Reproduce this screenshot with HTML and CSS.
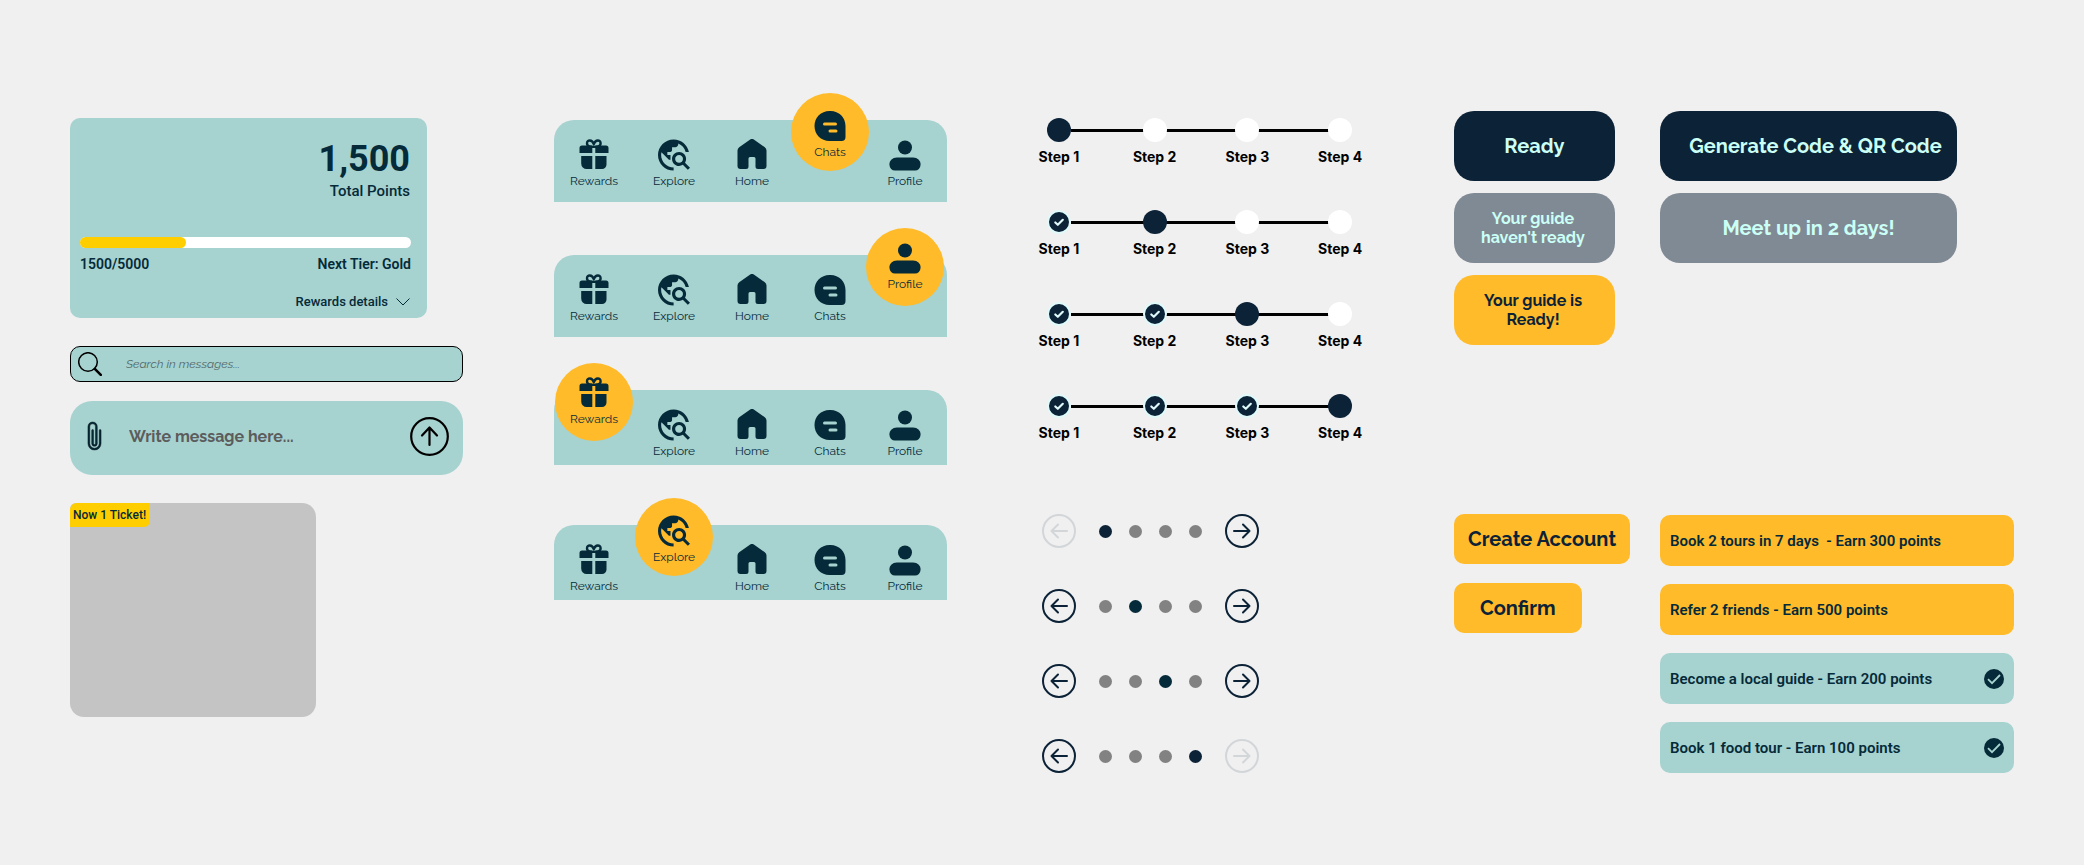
FILE: index.html
```html
<!DOCTYPE html>
<html lang="en">
<head>
<meta charset="utf-8">
<meta name="viewport" content="width=device-width, initial-scale=1">
<title>Travel app components</title>
<link rel="stylesheet" href="styles.css">
</head>
<body>
<svg class="sprite" aria-hidden="true">
  <symbol id="i-gift" viewBox="0 1 32 32">
    <path d="M4 7.500h10.300V15H1.500v-5A2.500 2.500 0 0 1 4 7.500zM17.300 7.500H28a2.500 2.500 0 0 1 2.500 2.500v5H17.300zM3.200 18h11.100v13H8.700a5.500 5.500 0 0 1-5.500-5.500zM17.300 18h11.200v8.500A4.500 4.500 0 0 1 24 31h-6.700z"/>
    <path d="M15.800 8.800C12.500 9.200 9 8.500 9 5.200 9 1.600 14.200 1.200 15.800 6c1.600-4.800 6.800-4.400 6.800-.8 0 3.300-3.500 4-6.800 3.600z" fill="none" stroke="currentColor" stroke-width="2.400" stroke-linejoin="round"/>
  </symbol>
  <symbol id="i-explore" viewBox="2 2 20.500 20">
    <path d="M19.300 16.900c.4-.7.7-1.500.7-2.400 0-2.500-2-4.500-4.500-4.500S11 12 11 14.500s2 4.500 4.500 4.500c.9 0 1.700-.3 2.400-.7l3.200 3.200 1.400-1.400-3.200-3.200zm-3.800.1c-1.400 0-2.500-1.100-2.500-2.500s1.100-2.500 2.500-2.500 2.500 1.100 2.500 2.500-1.100 2.500-2.500 2.500zM12 20v2C6.480 22 2 17.520 2 12S6.480 2 12 2c4.840 0 8.870 3.440 9.800 8h-2.070c-.64-2.460-2.400-4.470-4.730-5.410V5c0 1.100-.9 2-2 2h-2v2c0 .55-.45 1-1 1H8v2h2v3H9l-4.790-4.790C4.080 10.790 4 11.380 4 12c0 4.410 3.590 8 8 8z"/>
  </symbol>
  <symbol id="i-home" viewBox="0 1 32 32">
    <path d="M14.200 1.500a3 3 0 0 1 3.600 0l11 7.800a4 4 0 0 1 1.700 3.200V28a3 3 0 0 1-3 3H22a2.500 2.500 0 0 1-2.500-2.500V20.500a1.500 1.500 0 0 0-1.500-1.500h-4a1.500 1.500 0 0 0-1.500 1.500v8A2.500 2.500 0 0 1 10 31H4.500a3 3 0 0 1-3-3V12.500a4 4 0 0 1 1.700-3.200z"/>
  </symbol>
  <symbol id="i-chat" viewBox="0 0 32 32">
    <path fill-rule="evenodd" d="M15.500 1h1C25 1 31.500 7.500 31.500 16v11a4 4 0 0 1-4 4h-12C7 31 .5 24.500.5 16S7 1 15.500 1zM10.500 12.500a1.500 1.500 0 0 0 0 3h11a1.500 1.500 0 0 0 0-3zM16 19.500a1.500 1.500 0 0 0 0 3h6a1.500 1.500 0 0 0 0-3z"/>
  </symbol>
  <symbol id="i-profile" viewBox="0 0 32 32">
    <circle cx="16" cy="8.500" r="7"/>
    <path d="M8 18.500h16a7.500 6.500 0 0 1 7.500 7.500 5.500 5.500 0 0 1-5.500 5.500H6A5.500 5.500 0 0 1 .5 26 7.500 6.500 0 0 1 8 18.500z"/>
  </symbol>
  <symbol id="i-arrow-left" viewBox="0 0 34 34">
    <g fill="none" stroke="currentColor" stroke-width="2" stroke-linecap="round" stroke-linejoin="round"><circle cx="17" cy="17" r="16"/><path d="M25 17H9.500M16 10.500 9.500 17l6.500 6.500"/></g>
  </symbol>
  <symbol id="i-arrow-right" viewBox="0 0 34 34">
    <g fill="none" stroke="currentColor" stroke-width="2" stroke-linecap="round" stroke-linejoin="round"><circle cx="17" cy="17" r="16"/><path d="M9 17h15.500M18 10.500l6.500 6.500-6.500 6.500"/></g>
  </symbol>
  <symbol id="i-done" viewBox="0 0 24 24">
    <circle cx="12" cy="12" r="11" fill="#0c2237" stroke="#dffafa" stroke-width="2"/>
    <path d="M8.300 12.500l2.500 2.300 5-5" fill="none" stroke="#dffafa" stroke-width="2.200" stroke-linecap="round" stroke-linejoin="round"/>
  </symbol>
  <symbol id="i-check" viewBox="0 0 20 20">
    <circle cx="10" cy="10" r="10"/>
    <path d="M4 10.200l4 4 8-8.200" fill="none" stroke="#a6d2cf" stroke-width="1.800"/>
  </symbol>
</svg>

<main class="board">
  <div class="col col-cards">
    <section class="points">
      <div class="points-total">1,500</div>
      <div class="points-label">Total Points</div>
      <div class="bar"><div class="bar-fill" style="width:32%"></div></div>
      <div class="tier"><span>1500/5000</span><span>Next Tier: Gold</span></div>
      <button class="details" type="button">Rewards details
        <svg class="chevron" viewBox="0 0 14 8"><path d="M.5.5 7 7 13.500.5" fill="none" stroke="currentColor"/></svg>
      </button>
    </section>
    <form class="search">
      <svg class="search-icon" viewBox="0 0 24 24"><g fill="none" stroke="#000"><circle cx="10" cy="10" r="9.300" stroke-width="1.500"/><path d="M16.800 16.800l6 6" stroke-width="2.600" stroke-linecap="round"/></g></svg>
      <input class="search-input" type="search" placeholder="Search in messages..." aria-label="Search in messages">
    </form>
    <form class="compose">
      <button class="icon-btn" type="button" aria-label="Attach a file">
        <svg class="clip" viewBox="4 0 8 16"><path stroke="#000" stroke-width=".2" d="M4.500 3a2.500 2.500 0 0 1 5 0v9a1.500 1.500 0 0 1-3 0V5a.5.5 0 0 1 1 0v7a.5.5 0 0 0 1 0V3a1.500 1.500 0 1 0-3 0v9a2.500 2.500 0 0 0 5 0V5a.5.5 0 0 1 1 0v7a3.500 3.500 0 1 1-7 0z"/></svg>
      </button>
      <input class="compose-input" type="text" placeholder="Write message here..." aria-label="Message">
      <button class="icon-btn" type="submit" aria-label="Send">
        <svg class="send" viewBox="0 0 39 39"><g fill="none" stroke="#000" stroke-width="2.200" stroke-linecap="round" stroke-linejoin="round"><circle cx="19.500" cy="19.500" r="18.300"/><path d="M19.500 28V11M12 18.500l7.500-8 7.500 8"/></g></svg>
      </button>
    </form>
    <div class="ticket"><span class="ticket-tag">Now 1 Ticket!</span></div>
  </div>

  <div class="col col-navs">
    <nav class="nav">
      <a class="tab" href="#rewards"><svg class="tab-icon"><use href="#i-gift"/></svg>Rewards</a>
      <a class="tab" href="#explore"><svg class="tab-icon"><use href="#i-explore"/></svg>Explore</a>
      <a class="tab" href="#home"><svg class="tab-icon"><use href="#i-home"/></svg>Home</a>
      <a class="tab active low" href="#chats"><svg class="tab-icon"><use href="#i-chat"/></svg>Chats</a>
      <a class="tab" href="#profile"><svg class="tab-icon"><use href="#i-profile"/></svg>Profile</a>
    </nav>
    <nav class="nav">
      <a class="tab" href="#rewards"><svg class="tab-icon"><use href="#i-gift"/></svg>Rewards</a>
      <a class="tab" href="#explore"><svg class="tab-icon"><use href="#i-explore"/></svg>Explore</a>
      <a class="tab" href="#home"><svg class="tab-icon"><use href="#i-home"/></svg>Home</a>
      <a class="tab" href="#chats"><svg class="tab-icon"><use href="#i-chat"/></svg>Chats</a>
      <a class="tab active" href="#profile"><svg class="tab-icon"><use href="#i-profile"/></svg>Profile</a>
    </nav>
    <nav class="nav short">
      <a class="tab active" href="#rewards"><svg class="tab-icon"><use href="#i-gift"/></svg>Rewards</a>
      <a class="tab" href="#explore"><svg class="tab-icon"><use href="#i-explore"/></svg>Explore</a>
      <a class="tab" href="#home"><svg class="tab-icon"><use href="#i-home"/></svg>Home</a>
      <a class="tab" href="#chats"><svg class="tab-icon"><use href="#i-chat"/></svg>Chats</a>
      <a class="tab" href="#profile"><svg class="tab-icon"><use href="#i-profile"/></svg>Profile</a>
    </nav>
    <nav class="nav short">
      <a class="tab" href="#rewards"><svg class="tab-icon"><use href="#i-gift"/></svg>Rewards</a>
      <a class="tab active low" href="#explore"><svg class="tab-icon"><use href="#i-explore"/></svg>Explore</a>
      <a class="tab" href="#home"><svg class="tab-icon"><use href="#i-home"/></svg>Home</a>
      <a class="tab" href="#chats"><svg class="tab-icon"><use href="#i-chat"/></svg>Chats</a>
      <a class="tab" href="#profile"><svg class="tab-icon"><use href="#i-profile"/></svg>Profile</a>
    </nav>
  </div>

  <div class="col col-steps">
    <div class="steppers">
      <ol class="stepper">
        <li class="step"><span class="dot now"></span>Step 1</li>
        <li class="step"><span class="dot"></span>Step 2</li>
        <li class="step"><span class="dot"></span>Step 3</li>
        <li class="step"><span class="dot"></span>Step 4</li>
      </ol>
      <ol class="stepper">
        <li class="step"><svg class="dot"><use href="#i-done"/></svg>Step 1</li>
        <li class="step"><span class="dot now"></span>Step 2</li>
        <li class="step"><span class="dot"></span>Step 3</li>
        <li class="step"><span class="dot"></span>Step 4</li>
      </ol>
      <ol class="stepper">
        <li class="step"><svg class="dot"><use href="#i-done"/></svg>Step 1</li>
        <li class="step"><svg class="dot"><use href="#i-done"/></svg>Step 2</li>
        <li class="step"><span class="dot now"></span>Step 3</li>
        <li class="step"><span class="dot"></span>Step 4</li>
      </ol>
      <ol class="stepper">
        <li class="step"><svg class="dot"><use href="#i-done"/></svg>Step 1</li>
        <li class="step"><svg class="dot"><use href="#i-done"/></svg>Step 2</li>
        <li class="step"><svg class="dot"><use href="#i-done"/></svg>Step 3</li>
        <li class="step"><span class="dot now"></span>Step 4</li>
      </ol>
    </div>
    <div class="pagers">
      <div class="pager">
        <button class="icon-btn arrow" type="button" aria-label="Previous" disabled><svg><use href="#i-arrow-left"/></svg></button>
        <span class="pages"><i class="page now"></i><i class="page"></i><i class="page"></i><i class="page"></i></span>
        <button class="icon-btn arrow" type="button" aria-label="Next"><svg><use href="#i-arrow-right"/></svg></button>
      </div>
      <div class="pager">
        <button class="icon-btn arrow" type="button" aria-label="Previous"><svg><use href="#i-arrow-left"/></svg></button>
        <span class="pages"><i class="page"></i><i class="page mid"></i><i class="page"></i><i class="page"></i></span>
        <button class="icon-btn arrow" type="button" aria-label="Next"><svg><use href="#i-arrow-right"/></svg></button>
      </div>
      <div class="pager">
        <button class="icon-btn arrow" type="button" aria-label="Previous"><svg><use href="#i-arrow-left"/></svg></button>
        <span class="pages"><i class="page"></i><i class="page"></i><i class="page mid"></i><i class="page"></i></span>
        <button class="icon-btn arrow" type="button" aria-label="Next"><svg><use href="#i-arrow-right"/></svg></button>
      </div>
      <div class="pager">
        <button class="icon-btn arrow" type="button" aria-label="Previous"><svg><use href="#i-arrow-left"/></svg></button>
        <span class="pages"><i class="page"></i><i class="page"></i><i class="page"></i><i class="page now"></i></span>
        <button class="icon-btn arrow" type="button" aria-label="Next" disabled><svg><use href="#i-arrow-right"/></svg></button>
      </div>
    </div>
  </div>

  <div class="col col-buttons">
    <div class="states">
      <div class="stack">
        <button class="pill navy" type="button">Ready</button>
        <button class="pill muted small" type="button">Your guide<br>haven't ready</button>
        <button class="pill amber small" type="button">Your guide is<br>Ready!</button>
      </div>
      <div class="stack">
        <button class="pill navy code" type="button">Generate Code &amp; QR Code</button>
        <button class="pill muted" type="button">Meet up in 2 days!</button>
      </div>
    </div>
    <div class="actions">
      <div class="action-list">
        <button class="action" type="button">Create Account</button>
        <button class="action confirm" type="button">Confirm</button>
      </div>
      <ul class="tasks">
        <li class="task">Book 2 tours in 7 days  - Earn 300 points</li>
        <li class="task">Refer 2 friends - Earn 500 points</li>
        <li class="task done">Become a local guide - Earn 200 points<svg class="task-check"><use href="#i-check"/></svg></li>
        <li class="task done">Book 1 food tour - Earn 100 points<svg class="task-check"><use href="#i-check"/></svg></li>
      </ul>
    </div>
  </div>
</main>
</body>
</html>
```
FILE: styles.css
```css
:root {
  --teal: #a6d2cf;
  --amber: #ffbb29;
  --yellow: #ffce00;
  --ink: #052a39;
  --navy: #0c2237;
  --mint: #cbfff6;
  --heading: Raleway, Lato, sans-serif;
}
* { box-sizing: border-box; }
body {
  margin: 0;
  background: #f0f0f0;
  color: var(--ink);
  font-family: Roboto, sans-serif;
}
button, input { font: inherit; color: inherit; }
button { border: 0; padding: 0; background: none; cursor: pointer; }
ol, ul { margin: 0; padding: 0; list-style: none; }
svg { display: block; fill: currentColor; }
.sprite { position: absolute; width: 0; height: 0; }

.board {
  display: grid;
  grid-template-columns: 484fr 456fr 444fr 560fr;
  padding: 111px 70px 48px;
}

/* Points card, inputs, ticket */
.col-cards { padding: 7px 91px 0 0; }
.points {
  display: flex;
  flex-direction: column;
  height: 200px;
  margin-right: 36px;
  padding: 20px 16px 0 10px;
  border-radius: 10px;
  background: var(--teal);
}
.points-total { font-size: 36px; font-weight: 700; line-height: 42px; text-align: right; padding-right: 1px; }
.points-label { font-size: 15px; font-weight: 500; line-height: 22px; text-align: right; padding-right: 1px; }
.bar { height: 11px; margin-top: 35px; border-radius: 6px; background: #fff; }
.bar-fill { height: 100%; border-radius: 6px; background: var(--yellow); }
.tier { display: flex; justify-content: space-between; margin-top: 8px; font-size: 14px; font-weight: 600; line-height: 16px; }
.details { display: flex; align-items: center; align-self: flex-end; gap: 8px; margin-top: 22px; padding-right: 1px; font-size: 13px; font-weight: 500; line-height: 16px; }
.chevron { width: 14px; height: 8px; }

.search {
  display: flex;
  align-items: center;
  gap: 24px;
  height: 36px;
  margin-top: 28px;
  padding: 0 7px;
  border: 1px solid #000;
  border-radius: 10px;
  background: var(--teal);
}
.search-icon { width: 24px; height: 24px; }
.search-input, .compose-input { flex: 1; min-width: 0; border: 0; padding: 0; outline: 0; background: none; font-family: var(--heading); }
.search-input { font-size: 12px; font-style: italic; }
.search-input::placeholder { color: #52696a; opacity: 1; }
.compose {
  display: flex;
  align-items: center;
  height: 74px;
  margin-top: 19px;
  padding: 0 14px 4px 17px;
  border-radius: 22px;
  background: var(--teal);
}
.clip { width: 15px; height: 30px; }
.compose-input { margin-left: 27px; font-size: 16px; font-weight: 700; }
.compose-input::placeholder { color: #5c5c5c; opacity: 1; }
.send { width: 39px; height: 39px; }
.ticket {
  height: 214px;
  margin: 28px 147px 0 0;
  border-radius: 6px 14px 14px 14px;
  background: #c4c4c4;
  overflow: hidden;
}
.ticket-tag { display: inline-block; padding: 0 4px 0 3px; border-radius: 6px 0; background: var(--yellow); font-size: 12px; font-weight: 500; line-height: 24px; }

/* Bottom navigation variants */
.col-navs { display: grid; grid-auto-rows: 135px; align-items: start; padding: 9px 63px 0 0; }
.nav {
  display: grid;
  grid-template-columns: 80fr 80fr 76fr 80fr 70fr;
  justify-items: center;
  align-items: start;
  height: 82px;
  padding-right: 7px;
  border-radius: 20px 20px 0 0;
  background: var(--teal);
}
.nav.short { height: 75px; }
.tab {
  display: flex;
  flex-direction: column;
  align-items: center;
  gap: 2px;
  margin-top: 19px;
  color: var(--ink);
  font-family: var(--heading);
  font-size: 12px;
  line-height: 16px;
  text-decoration: none;
}
.tab-icon { width: 32px; height: 32px; overflow: visible; }
.tab.active { width: 78px; height: 78px; margin: -27px -8px 0; padding-top: 14px; border-radius: 50%; background: var(--amber); }
.tab.active.low { padding-top: 17px; }

/* Steppers */
.steppers { display: grid; grid-auto-rows: 92px; padding: 7px 0 0 1px; }
.col-steps { padding-right: 66px; }
.stepper { position: relative; display: grid; grid-template-columns: 96fr 96fr 90fr 96fr; align-content: start; color: #000; }
.stepper::before { content: ""; position: absolute; top: 11px; left: 60px; right: 48px; height: 3px; background: #000; }
.step { position: relative; display: flex; flex-direction: column; align-items: center; gap: 6px; font-family: Inter, sans-serif; font-size: 14px; font-weight: 700; line-height: 17px; }
.dot { width: 24px; height: 24px; border-radius: 50%; background: #fff; }
svg.dot { background: none; }
.dot.now { background: var(--navy); }

/* Pagers */
.pagers { display: grid; grid-auto-rows: 75px; padding: 28px 0 0 32px; }
.pager { display: flex; align-items: start; gap: 23px; color: var(--navy); }
.arrow svg { width: 34px; height: 34px; }
.arrow:disabled { color: #d2d6d9; }
.pages { display: flex; align-items: center; gap: 17px; height: 34px; }
.page { width: 13px; height: 13px; border-radius: 50%; background: #828282; }
.page.now { background: var(--navy); }
.page.mid { background: var(--ink); }

/* Buttons */
.states { display: grid; grid-template-columns: 161fr 297fr 12fr; column-gap: 45px; }
.stack { display: grid; grid-auto-rows: 70px; align-content: start; gap: 12px; }
.pill { border-radius: 20px; font-family: var(--heading); font-size: 20px; font-weight: 700; line-height: 24px; }
.pill.small { padding-right: 3px; font-size: 16px; line-height: 19px; }
.pill.code { padding-left: 14px; }
.navy { background: var(--navy); color: var(--mint); }
.muted { background: #808a94; color: var(--mint); }
.amber { background: var(--amber); color: var(--navy); }
.actions { display: grid; grid-template-columns: 206fr 354fr; margin-top: 169px; }
.action-list { display: flex; flex-direction: column; align-items: start; gap: 19px; }
.action { height: 50px; padding: 0 14px; border-radius: 10px; background: var(--amber); color: var(--navy); font-family: var(--heading); font-size: 20px; font-weight: 700; }
.action.confirm { padding: 0 26px; }
.tasks { display: grid; gap: 18px; padding-top: 1px; }
.task { display: flex; align-items: center; justify-content: space-between; height: 51px; padding: 0 10px; border-radius: 10px; background: var(--amber); font-size: 15px; font-weight: 600; white-space: pre; }
.task.done { background: var(--teal); }
.task-check { width: 20px; height: 20px; }
```
